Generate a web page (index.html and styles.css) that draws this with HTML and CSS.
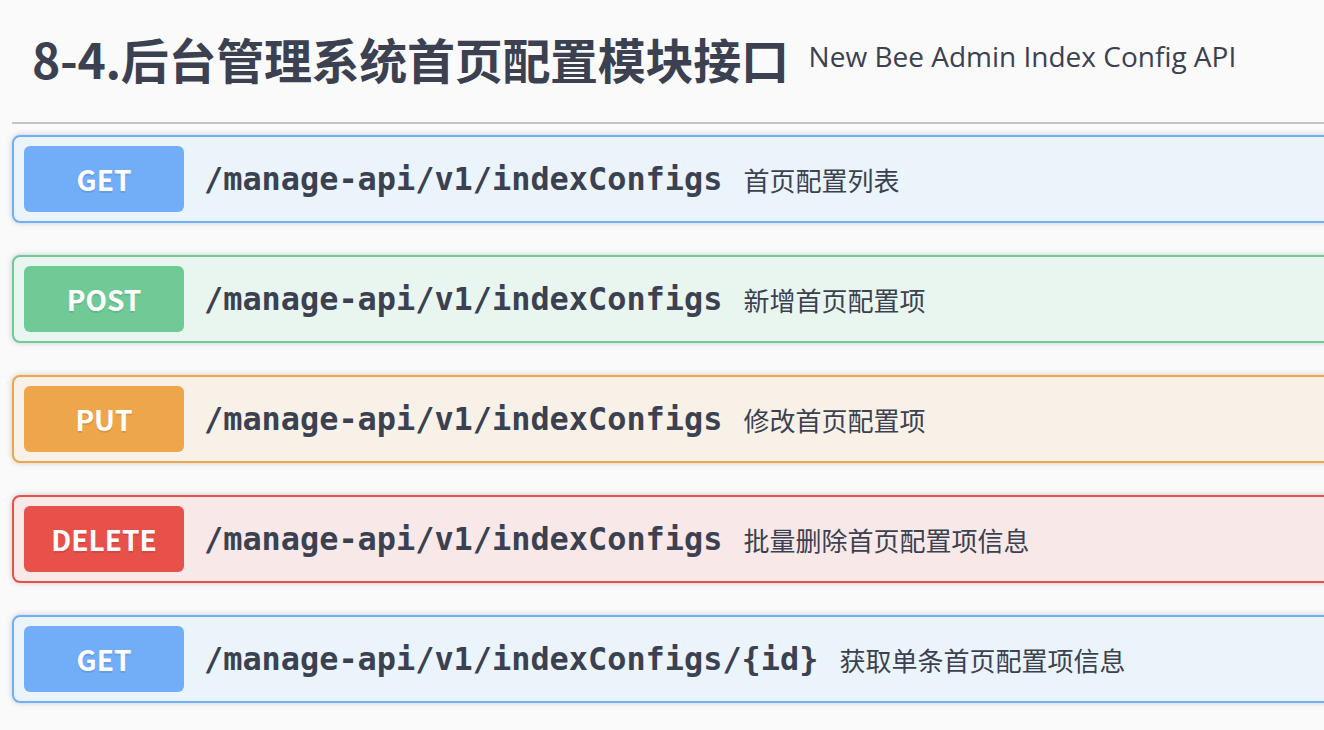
FILE: index.html
```html
<!DOCTYPE html>
<html lang="zh-CN">
<head>
<meta charset="utf-8">
<title>8-4.后台管理系统首页配置模块接口</title>
<link rel="stylesheet" href="styles.css">
</head>
<body>
<div class="tag-section">
  <h4 class="tag-title">
    <span class="tag-name">8-4.后台管理系统首页配置模块接口</span>
    <small class="tag-desc">New Bee Admin Index Config API</small>
  </h4>
  <div class="ops">
    <div class="opblock get">
      <span class="method">GET</span>
      <span class="path">/manage-api/v1/indexConfigs</span>
      <span class="summary">首页配置列表</span>
    </div>
    <div class="opblock post">
      <span class="method">POST</span>
      <span class="path">/manage-api/v1/indexConfigs</span>
      <span class="summary">新增首页配置项</span>
    </div>
    <div class="opblock put">
      <span class="method">PUT</span>
      <span class="path">/manage-api/v1/indexConfigs</span>
      <span class="summary">修改首页配置项</span>
    </div>
    <div class="opblock delete">
      <span class="method">DELETE</span>
      <span class="path">/manage-api/v1/indexConfigs</span>
      <span class="summary">批量删除首页配置项信息</span>
    </div>
    <div class="opblock get">
      <span class="method">GET</span>
      <span class="path">/manage-api/v1/indexConfigs/{id}</span>
      <span class="summary">获取单条首页配置项信息</span>
    </div>
  </div>
</div>
</body>
</html>
```
FILE: styles.css
```css
html, body {
  margin: 0;
  padding: 0;
  overflow: hidden;
  background: #fafafa;
}
body {
  width: 1324px;
  height: 730px;
  color: #3b4151;
  font-family: "Noto Sans CJK SC", "Noto Sans", sans-serif;
}
.tag-section {
  margin-left: 12px;
  width: 1340px;
}
.tag-title {
  margin: 0 0 11px 0;
  height: 122px;
  box-sizing: content-box;
  padding: 0 0 0 20px;
  display: flex;
  align-items: center;
  border-bottom: 2px solid #c3c4c8;
  font-weight: 700;
}
.tag-name {
  font-size: 48px;
  font-weight: 700;
  line-height: 1;
  letter-spacing: -0.3px;
  position: relative;
  top: -3px;
}
.tag-desc {
  font-family: "Open Sans", sans-serif;
  font-weight: 400;
  font-size: 28px;
  padding-left: 20px;
  line-height: 1;
  position: relative;
  top: -5px;
}
.ops {
  display: flex;
  flex-direction: column;
  gap: 32px;
}
.opblock {
  height: 84px;
  border: 2px solid;
  border-radius: 8px;
  box-shadow: 0 0 6px rgba(0, 0, 0, 0.19);
  padding: 0 10px;
  display: flex;
  align-items: center;
}
.method {
  width: 160px;
  height: 66px;
  border-radius: 6px;
  display: flex;
  align-items: center;
  justify-content: center;
  color: #fff;
  font-size: 28px;
  font-weight: 700;
  text-shadow: 0 2px 0 rgba(0, 0, 0, 0.1);
  flex: none;
}
.path {
  padding: 0 21px 0 20px;
  font-family: "DejaVu Sans Mono", "Liberation Mono", monospace;
  font-weight: 700;
  font-size: 31.9px;
  color: #3b4151;
}
.summary {
  font-size: 26px;
  color: #3b4151;
}
.get { background: #ebf3fb; border-color: #72adf8; }
.get .method { background: #72adf8; }
.post { background: #e9f6f0; border-color: #6fca96; }
.post .method { background: #6fca96; }
.put { background: #f8f1e8; border-color: #eda64b; }
.put .method { background: #eda64b; }
.delete { background: #f8e8e8; border-color: #e8504a; }
.delete .method { background: #e8504a; }
```
